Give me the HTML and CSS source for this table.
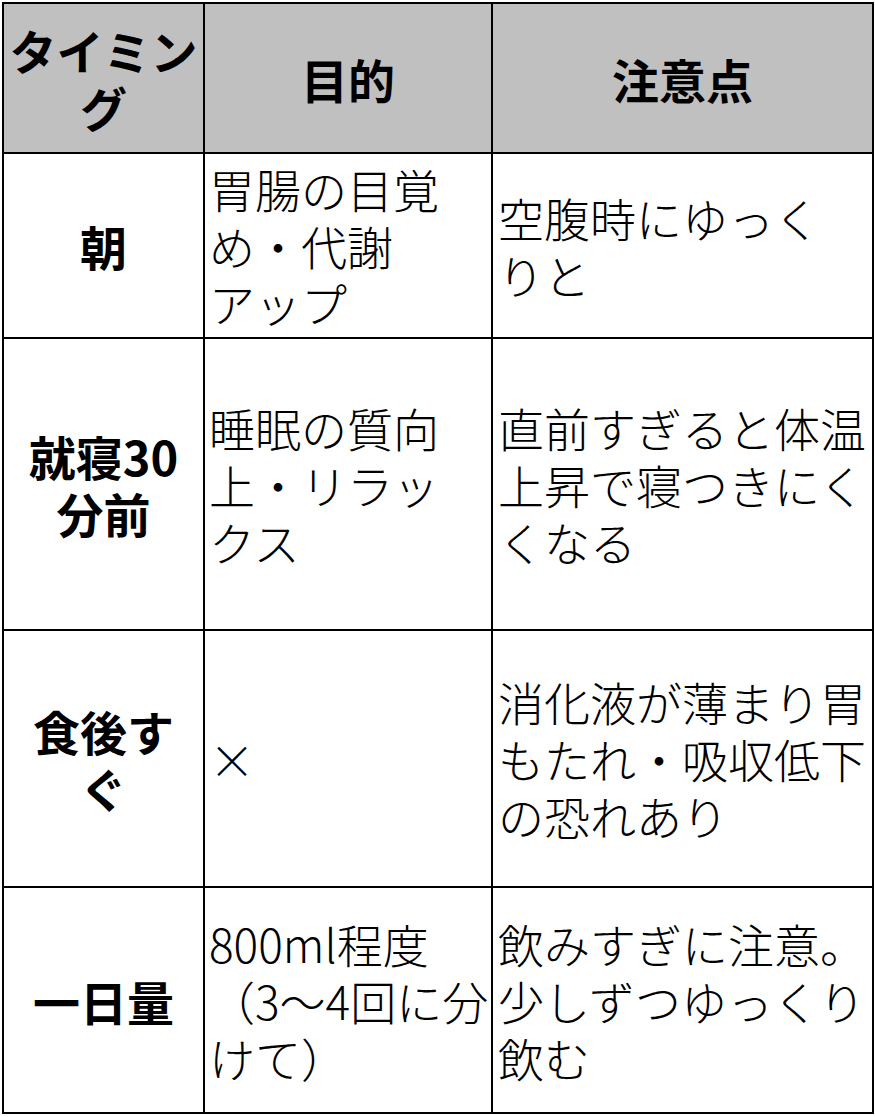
FILE: index.html
```html
<!DOCTYPE html>
<html lang="ja">
<head>
<meta charset="utf-8">
<title>飲むタイミング</title>
<link rel="stylesheet" href="styles.css">
</head>
<body>
<table class="timing-table">
  <colgroup>
    <col class="col-timing">
    <col class="col-purpose">
    <col class="col-note">
  </colgroup>
  <thead>
    <tr class="row-head">
      <th>タイミン<br>グ</th>
      <th>目的</th>
      <th>注意点</th>
    </tr>
  </thead>
  <tbody>
    <tr class="row-1">
      <th>朝</th>
      <td>胃腸の目覚<br>め・代謝<br>アップ</td>
      <td>空腹時にゆっく<br>りと</td>
    </tr>
    <tr class="row-2">
      <th>就寝30<br>分前</th>
      <td>睡眠の質向<br>上・リラッ<br>クス</td>
      <td>直前すぎると体温<br>上昇で寝つきにく<br>くなる</td>
    </tr>
    <tr class="row-3">
      <th>食後す<br>ぐ</th>
      <td>×</td>
      <td>消化液が薄まり胃<br>もたれ・吸収低下<br>の恐れあり</td>
    </tr>
    <tr class="row-4">
      <th>一日量</th>
      <td>800ml程度<br>（3～4回に分<br>けて）</td>
      <td>飲みすぎに注意。<br>少しずつゆっくり<br>飲む</td>
    </tr>
  </tbody>
</table>
</body>
</html>
```

FILE: styles.css
```css
html, body {
  margin: 0;
  padding: 0;
  background: #ffffff;
}

body {
  padding: 2px 0 0 2px;
  font-family: "Noto Sans CJK JP", "Noto Sans", sans-serif;
  color: #000000;
}

.timing-table {
  border-collapse: separate;
  border-spacing: 2px;
  background: #000000;
  table-layout: fixed;
  width: 872px;
}

.col-timing { width: 199px; }
.col-purpose { width: 286px; }
.col-note { width: 379px; }

.timing-table th,
.timing-table td {
  padding: 0;
  background: #ffffff;
  vertical-align: middle;
  white-space: nowrap;
  overflow: hidden;
}

.timing-table th {
  font-size: 47px;
  font-weight: 700;
  line-height: 57px;
  text-align: center;
}

.timing-table td {
  font-size: 46px;
  font-weight: 300;
  line-height: 57px;
  text-align: left;
  padding: 0 2px 0 5px;
}

.timing-table td:nth-child(2) {
  padding-left: 4px;
}

.row-head th {
  background: #c0c0c0;
  height: 148px;
}

.row-1 th, .row-1 td { height: 183px; }
.row-2 th, .row-2 td { height: 290px; }
.row-3 th, .row-3 td { height: 255px; }
.row-4 th, .row-4 td { height: 224px; }
```
